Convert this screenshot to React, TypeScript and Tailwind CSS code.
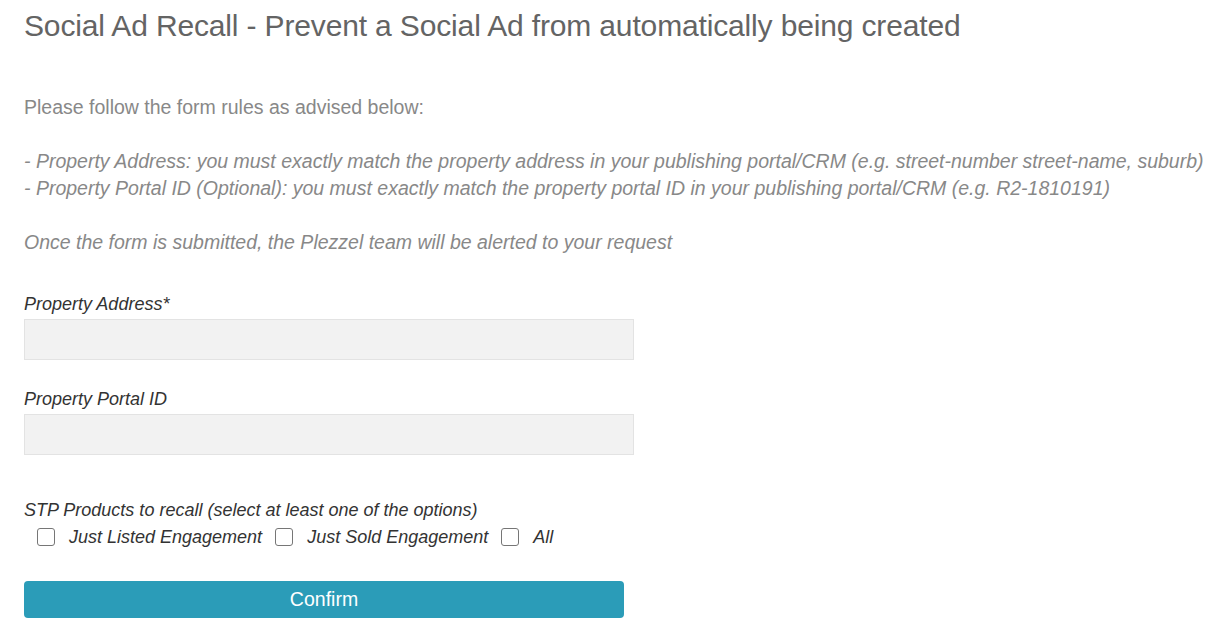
import React from "react";

function Check({ label }: { label: string }) {
  return (
    <label className="flex items-center">
      <span className="ml-[13px] mr-[14px] inline-block h-[18px] w-[18px] rounded-[3px] border-[1.5px] border-[#767676] bg-white" />
      <span className="italic">{label}</span>
    </label>
  );
}

export default function App() {
  return (
    <div
      className="min-h-[642px] bg-white px-6 text-[#333]"
      style={{ fontFamily: '"Liberation Sans", Arial, sans-serif' }}
    >
      <h1 className="pt-[9px] text-[30px] leading-[34px] tracking-[-0.15px] text-[#646464]">
        Social Ad Recall - Prevent a Social Ad from automatically being created
      </h1>
      <p className="mt-[51px] text-[19.5px] leading-[27px] text-[#888]">
        Please follow the form rules as advised below:
        <br />
        <br />
        <i>
          - Property Address: you must exactly match the property address in your publishing portal/CRM (e.g. street-number street-name, suburb)
        </i>
        <br />
        <i>
          - Property Portal ID (Optional): you must exactly match the property portal ID in your publishing portal/CRM (e.g. R2-1810191)
        </i>
        <br />
        <br />
        <i>Once the form is submitted, the Plezzel team will be alerted to your request</i>
      </p>
      <div className="mt-[38px] text-[18px] italic leading-[20px] text-[#333]">Property Address*</div>
      <div className="mt-[5px] h-[41px] w-[610px] border border-[#e3e3e3] bg-[#f2f2f2]" />
      <div className="mt-[29px] text-[18px] italic leading-[20px] text-[#333]">Property Portal ID</div>
      <div className="mt-[5px] h-[41px] w-[610px] border border-[#e3e3e3] bg-[#f2f2f2]" />
      <div className="mt-[45px] text-[18px] italic leading-[20px] text-[#333]">
        STP Products to recall (select at least one of the options)
      </div>
      <div className="mt-[7px] flex items-center text-[18px] leading-[20px] text-[#333]">
        <Check label="Just Listed Engagement" />
        <Check label="Just Sold Engagement" />
        <Check label="All" />
      </div>
      <button className="mt-[34px] h-[37px] w-[600px] rounded-[4px] bg-[#2b9cb8] text-[19.5px] text-white">
        Confirm
      </button>
    </div>
  );
}
